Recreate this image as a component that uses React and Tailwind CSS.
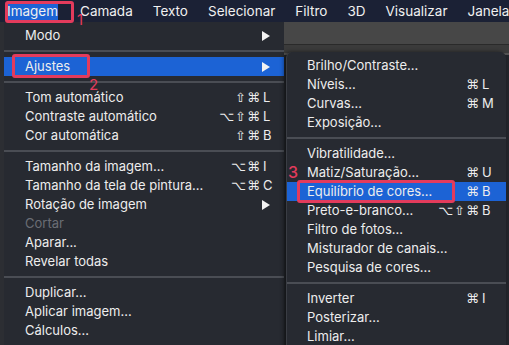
const FONT = { fontFamily: 'Inter, "Noto Sans", "DejaVu Sans", sans-serif' }

const BAR = ['Camada', 'Texto', 'Selecionar', 'Filtro', '3D', 'Visualizar', 'Janela']

const MAIN = [
  { label: 'Modo', arrow: true },
  { sep: true },
  { label: 'Ajustes', arrow: true, active: true },
  { sep: true },
  { label: 'Tom automático', mods: '⇧⌘', key: 'L' },
  { label: 'Contraste automático', mods: '⌥⇧⌘', key: 'L' },
  { label: 'Cor automática', mods: '⇧⌘', key: 'B' },
  { sep: true },
  { label: 'Tamanho da imagem...', mods: '⌥⌘', key: 'I' },
  { label: 'Tamanho da tela de pintura...', mods: '⌥⌘', key: 'C' },
  { label: 'Rotação de imagem', arrow: true },
  { label: 'Cortar', disabled: true },
  { label: 'Aparar...' },
  { label: 'Revelar todas' },
  { sep: true },
  { label: 'Duplicar...' },
  { label: 'Aplicar imagem...' },
  { label: 'Cálculos...' },
]

const SUB = [
  { label: 'Brilho/Contraste...' },
  { label: 'Níveis...', mods: '⌘', key: 'L' },
  { label: 'Curvas...', mods: '⌘', key: 'M' },
  { label: 'Exposição...' },
  { sep: true },
  { label: 'Vibratilidade...' },
  { label: 'Matiz/Saturação...', mods: '⌘', key: 'U' },
  { label: 'Equilíbrio de cores...', mods: '⌘', key: 'B', active: true },
  { label: 'Preto-e-branco...', mods: '⌥⇧⌘', key: 'B' },
  { label: 'Filtro de fotos...' },
  { label: 'Misturador de canais...' },
  { label: 'Pesquisa de cores...' },
  { sep: true },
  { label: 'Inverter', mods: '⌘', key: 'I' },
  { label: 'Posterizar...' },
  { label: 'Limiar...' },
]

function Arrow() {
  return (
    <svg width="8" height="10" viewBox="0 0 8 10" className="mr-[5px]">
      <path d="M0 0 L8 5 L0 10 Z" fill="#f2f2f2" />
    </svg>
  )
}

function Item({ item, padLeft, padRight }) {
  if (item.sep) {
    return <div className="my-[5px] h-[2px] bg-[#4a4d54]" />
  }
  return (
    <div
      className={`flex h-[19px] items-center ${item.active ? 'bg-[#1c63d5]' : ''}`}
      style={{ paddingLeft: padLeft, paddingRight: padRight }}
    >
      <span className={`flex-1 text-[13px] ${item.disabled ? 'text-[#6b6e75]' : 'text-[#ededed]'}`}>
        {item.label}
      </span>
      {item.key && (
        <span className="flex items-center text-[13px] text-[#ededed]">
          <span className="text-right tracking-[1px]" style={{ fontFamily: '"DejaVu Sans", sans-serif', fontSize: 13 }}>
            {item.mods}
          </span>
          <span className="w-[14px] pl-[2px]">{item.key}</span>
        </span>
      )}
      {item.arrow && <Arrow />}
    </div>
  )
}

export default function App() {
  return (
    <div className="relative h-[345px] w-[509px] overflow-hidden bg-[#1f2127]" style={FONT}>
      {/* menu bar */}
      <div className="flex h-[22px] items-center bg-[#1b2135] text-[13.5px] text-[#f0f0f0]">
        <div className="ml-[7px] flex h-[20px] w-[64px] items-center justify-center bg-[#1c63d5]">Imagem</div>
        <div className="ml-[12px] flex items-center">
          {BAR.map(b => (
            <span key={b} className="px-[10px]">{b}</span>
          ))}
        </div>
      </div>

      <div className="flex">
        {/* left strip */}
        <div className="w-[4px] bg-[#2c2e33]" />
        {/* main menu */}
        <div className="h-[323px] w-[280px] bg-[#272a31] pt-[4px]">
          {MAIN.map((m, i) => (
            <Item key={i} item={m} padLeft={21} padRight={9} />
          ))}
        </div>
        {/* workspace */}
        <div className="flex-1 bg-[#23252b]">
          <div className="h-[22px] bg-[#474747]" />
          <div className="h-[1px] bg-[#2a2a2a]" />
          <div className="h-[8px] bg-[#3b3b3b]" />
          <div className="h-[2px] bg-[#555]" />
        </div>
      </div>

      {/* submenu */}
      <div className="absolute left-[286px] top-[52px] w-[220px] rounded-t-[6px] border-l border-[#3a3d44] bg-[#272a31] pt-[4px] pb-[10px] shadow-[-2px_0_4px_rgba(0,0,0,0.5)]">
        {SUB.map((m, i) => (
          <Item key={i} item={m} padLeft={20} padRight={12} />
        ))}
      </div>

      {/* annotations */}
      <div className="absolute left-[5px] top-[1px] h-[22px] w-[69px] rounded-[3px] border-[3px] border-[#e33b5c]" />
      <span className="absolute left-[77px] top-[12px] text-[15px] leading-none text-[#e33b5c]">1</span>
      <div className="absolute left-[12px] top-[54px] h-[24px] w-[78px] rounded-[3px] border-[3px] border-[#e33b5c]" />
      <span className="absolute left-[89px] top-[77px] text-[15px] leading-none text-[#e33b5c]">2</span>
      <span className="absolute left-[288px] top-[164px] text-[16px] font-medium leading-none text-[#e33b5c]">3</span>
      <div className="absolute left-[297px] top-[180px] h-[23px] w-[158px] rounded-[3px] border-[3px] border-[#e33b5c]" />
    </div>
  )
}
